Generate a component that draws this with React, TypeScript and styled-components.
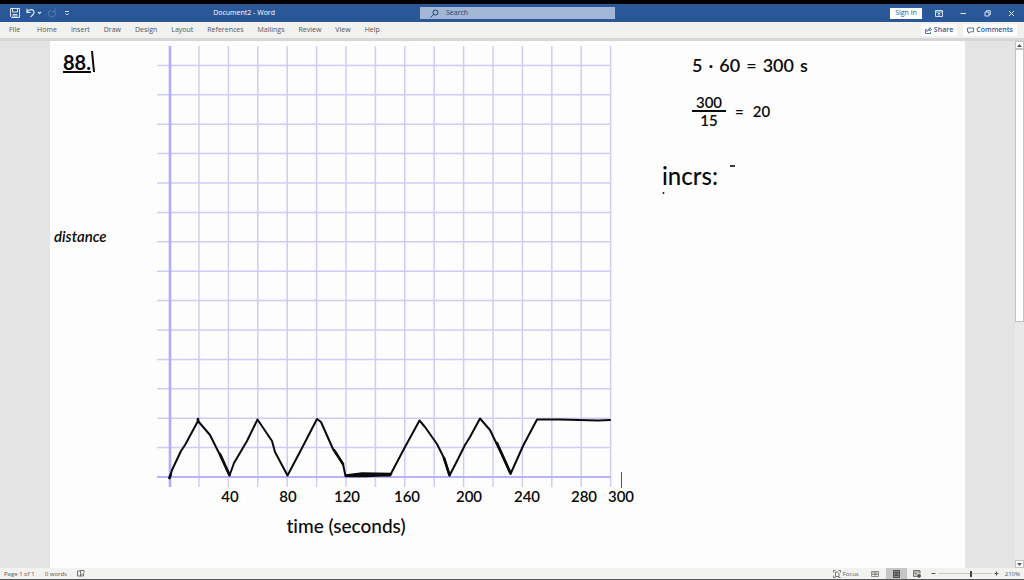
import React from "react";
import styled, { createGlobalStyle } from "styled-components";

const GlobalStyle = createGlobalStyle`
  * { box-sizing: border-box; }
  html, body { margin: 0; background: #e4e4e4; }
  body { font-family: "Open Sans", "Noto Sans", sans-serif; font-size: 7px; line-height: 10px; color: #555; }
  button, input { font: inherit; color: inherit; margin: 0; }
`;

const ink = "#0a0a0a";

const Window = styled.div`
  display: flex;
  flex-direction: column;
  min-height: 100vh;
  border-top: 4px solid #000;
  border-bottom: 1px solid #555;
`;

const TitleBar = styled.header`
  display: grid;
  grid-template-columns: 420fr 195px 409fr;
  align-items: center;
  height: 18px;
  background: #2a5798;
  color: #fff;
`;

const TitleLeft = styled.div`
  display: flex;
  align-items: center;
  justify-content: space-between;
  padding: 0 145px 0 10px;
`;

const Tools = styled.div`
  display: flex;
  align-items: center;
  gap: 6px;
`;

const IconButton = styled.button<{ $dim?: boolean }>`
  display: flex;
  padding: 0;
  border: 0;
  background: none;
  opacity: ${(p) => (p.$dim ? 0.25 : 1)};
`;

const DocTitle = styled.h1`
  margin: 0;
  font-size: 7px;
  font-weight: 400;
  white-space: nowrap;
`;

const SearchBox = styled.label`
  display: flex;
  align-items: center;
  gap: 7px;
  height: 12px;
  padding-left: 10px;
  background: #a2b7d5;
  color: #1f3f70;
`;

const SearchInput = styled.input`
  flex: 1;
  min-width: 0;
  height: 10px;
  padding: 0;
  border: 0;
  outline: 0;
  background: transparent;
  &::placeholder { color: #1f3f70; opacity: 1; }
`;

const WindowControls = styled.div`
  display: flex;
  align-items: center;
  justify-content: flex-end;
  gap: 17px;
  padding-right: 9px;
`;

const SignIn = styled.button`
  height: 11px;
  width: 32px;
  padding: 0;
  margin-right: -4px;
  border: 0;
  background: #fff;
  color: #2a5798;
  line-height: 10px;
`;

const Ribbon = styled.nav`
  display: flex;
  align-items: center;
  justify-content: space-between;
  height: 19px;
  padding: 0 7px 0 9px;
  border-bottom: 3px solid #d6d6d6;
  background: #f1f1f0;
`;

const Tabs = styled.div`
  display: flex;
  gap: 14px;
`;

const Tab = styled.button`
  padding: 0;
  border: 0;
  background: none;
  &:first-child { margin-right: 3px; }
`;

const Actions = styled.div`
  display: flex;
  gap: 6px;
`;

const Action = styled.button`
  display: flex;
  align-items: center;
  gap: 2px;
  height: 12px;
  padding: 0 4px;
  border: 0;
  background: #fff;
  color: #2a5798;
  font-weight: 600;
`;

const Workspace = styled.main`
  flex: 1;
  display: flex;
  background: #e4e4e4;
`;

const Page = styled.article`
  flex: 1;
  display: flex;
  align-items: flex-start;
  margin: 0 50px;
  background: #fdfdfd;
  color: ${ink};
  font-family: Lato, "Open Sans", sans-serif;
  font-weight: 500;
  font-variant-ligatures: none;
`;

const Margin = styled.div`
  width: 100px;
  padding: 9px 0 0 4px;
`;

const Problem = styled.h2`
  display: flex;
  align-items: flex-start;
  margin: 0 0 152px 9px;
  font-size: 20px;
  line-height: 24px;
  font-weight: 700;
`;

const ProblemText = styled.span`
  width: 28px;
  height: 23px;
  border-bottom: 2px solid ${ink};
`;

const AxisName = styled.p`
  margin: 0;
  font-size: 15px;
  line-height: 20px;
  font-weight: 600;
  font-style: italic;
`;

const Graph = styled.svg`
  flex: none;
  display: block;
  width: 490px;
  height: 510px;
`;

const TickText = styled.text`
  font-size: 15px;
  font-weight: 600;
  text-anchor: middle;
  fill: ${ink};
`;

const AxisText = styled.text`
  font-size: 19px;
  font-weight: 500;
  text-anchor: middle;
  fill: ${ink};
`;

const Notes = styled.div`
  flex: 1;
  padding: 13px 0 0 22px;
`;

const Equation = styled.div<{ $size: number; $gap: number }>`
  display: flex;
  align-items: center;
  gap: ${(p) => p.$gap}px;
  margin: 0 0 18px 30px;
  font-size: ${(p) => p.$size}px;
  line-height: 22px;
  font-weight: 600;
`;

const Fraction = styled.div`
  display: flex;
  flex-direction: column;
  width: 34px;
  text-align: center;
  line-height: 16px;
`;

const Numerator = styled.span`
  border-bottom: 2px solid ${ink};
`;

const Increments = styled.div`
  display: flex;
  margin-top: 36px;
  font-size: 24px;
  line-height: 24px;
`;

const ScrollBar = styled.div`
  display: flex;
  flex-direction: column;
  align-items: stretch;
  width: 9px;
  background: #e9e9e9;
`;

const ScrollButton = styled.button`
  display: flex;
  align-items: center;
  justify-content: center;
  height: 8px;
  padding: 0;
  border: 1px solid #c4c4c4;
  background: #fff;
`;

const ScrollThumb = styled.div`
  flex: 273;
  border: 1px solid #c4c4c4;
  background: #fff;
`;

const ScrollRest = styled.div`
  flex: 239;
`;

const StatusBar = styled.footer`
  display: flex;
  align-items: center;
  justify-content: space-between;
  height: 11px;
  padding: 0 4px;
  background: #f2f2f1;
  font-size: 6px;
`;

const StatusGroup = styled.div<{ $gap: number }>`
  display: flex;
  align-items: center;
  gap: ${(p) => p.$gap}px;
`;

const ZoomGroup = styled(StatusGroup)`
  padding-right: 3px;
`;

const ViewButton = styled.button<{ $active?: boolean }>`
  display: flex;
  align-items: center;
  justify-content: center;
  gap: 2px;
  min-width: 21px;
  height: 11px;
  padding: 0;
  border: 0;
  background: ${(p) => (p.$active ? "#c6c6c6" : "none")};
  &:first-child { margin-right: 6px; }
`;

const ZoomSlider = styled.input`
  appearance: none;
  width: 54px;
  height: 9px;
  background: linear-gradient(#c8c8c8, #c8c8c8) center / 100% 1px no-repeat;
  &::-webkit-slider-thumb {
    appearance: none;
    width: 2px;
    height: 6px;
    background: #444;
  }
`;

const tabs = ["File", "Home", "Insert", "Draw", "Design", "Layout", "References", "Mailings", "Review", "View", "Help"];

const ticks: [string, number][] = [
  ["40", 230], ["80", 288], ["120", 347], ["160", 407], ["200", 469], ["240", 527], ["280", 584], ["300", 621],
];

const step = 29.4;

function DistanceGraph() {
  return (
    <Graph viewBox="150 41 490 510" role="img" aria-label="Distance against time in seconds">
      <g stroke="#cfccfa" strokeWidth="1.5">
        {Array.from({ length: 14 }, (_, i) => (
          <path key={`h${i}`} d={`M157 ${65.4 + i * step}H611`} />
        ))}
        {Array.from({ length: 15 }, (_, i) => (
          <path key={`v${i}`} d={`M${170 + (i + 1) * step - 0.4} 46V487`} />
        ))}
      </g>
      <path d="M157 477H611" stroke="#b9b4f9" strokeWidth="2.2" />
      <path d="M170 46V487" stroke="#b3acf9" strokeWidth="2.6" />
      <g fill="none" stroke={ink} strokeWidth="2" strokeLinecap="round" strokeLinejoin="round">
        <path d="M170 477L172 470L181 451L185 445L198 421L210 435L220 455L229.500 475.500L234 463L247 441L257.500 419.500L272 441L275 452L287.500 475.500L302 448L317 419L321 422L333 449L343 464L345.500 476L357 474.500L366 474L390 475.500L405 447L419.500 420.500L425 427L437 444L444 458L449.500 475.500L456 463L465 445L470 437L480 418.500L490 430L502 455L510.500 474L523 446L537 419.500H560L598 420.500L610 420" />
        <path d="M169.500 478L170.500 475M198 419V422M220 454L229.500 475M334 450L343 464M346 476H366L390 475M444 458L449.500 475M346 475.500L362 473.500L391 474M497 443L510.500 473" strokeWidth="2.600" />
      </g>
      <path d="M621.5 472V488" stroke="#555" strokeWidth="1" />
      {ticks.map(([label, x]) => (
        <TickText key={label} x={x} y={502}>{label}</TickText>
      ))}
      <AxisText x={346} y={533}>time (seconds)</AxisText>
    </Graph>
  );
}

export default function App() {
  return (
    <>
      <GlobalStyle />
      <Window>
        <TitleBar>
          <TitleLeft>
            <Tools>
              <IconButton aria-label="Save">
                <svg width="10" height="10" viewBox="0 0 10 10" fill="none" stroke="#dbe5f3">
                  <path d="M.5.500H9.500V9.500H1.500L.5 8.500ZM2.500.500V4H7.500V.500M3 9.500V6.500H7V9.500M5 7V9" />
                </svg>
              </IconButton>
              <IconButton aria-label="Undo">
                <svg width="16" height="10" viewBox="0 0 16 10" fill="none" stroke="#dbe5f3" strokeWidth="1.200">
                  <path d="M1 .8V4.500H4.800M1.200 4.300C3 1 7.500.800 8 4C8.300 6 6.500 7.200 4.500 9M12 4L13.500 5.500L15 4" />
                </svg>
              </IconButton>
              <IconButton aria-label="Redo" $dim>
                <svg width="9" height="10" viewBox="0 0 9 10" fill="none" stroke="#dbe5f3">
                  <path d="M7 .500V3.500H4M7 3.500A3.500 3.500 0 1 1 3 2" />
                </svg>
              </IconButton>
              <IconButton aria-label="Customize toolbar">
                <svg width="8" height="8" viewBox="4 0 8 8" fill="none" stroke="#dbe5f3">
                  <path d="M6 2.500H10M6.500 4.500L8 6L9.500 4.500" />
                </svg>
              </IconButton>
            </Tools>
            <DocTitle>Document2 - Word</DocTitle>
          </TitleLeft>
          <SearchBox>
            <svg width="9" height="9" viewBox="0 0 9 9" fill="none" stroke="#1f3f70" aria-hidden="true">
              <circle cx="5.500" cy="3.500" r="2.500" />
              <path d="M3.700 5.300L.5 8.500" />
            </svg>
            <SearchInput placeholder="Search" aria-label="Search" />
          </SearchBox>
          <WindowControls>
            <SignIn>Sign in</SignIn>
            <IconButton aria-label="Ribbon display options">
              <svg width="8" height="7" viewBox="0 0 8 7" fill="none" stroke="#e6edf7">
                <path d="M.5.500H7.500V6.500H.500ZM.5 2H7.500M4 6V3M2.700 4.300L4 3L5.300 4.300" strokeWidth=".9" />
              </svg>
            </IconButton>
            <IconButton aria-label="Minimize">
              <svg width="7" height="7" viewBox="0 0 7 7" stroke="#e6edf7"><path d="M.5 3.500H6" /></svg>
            </IconButton>
            <IconButton aria-label="Restore">
              <svg width="7" height="7" viewBox="0 0 7 7" fill="none" stroke="#e6edf7">
                <path d="M1 2H5V6H1ZM2.500 2V.700H6.300V4.500H5" strokeWidth=".9" />
              </svg>
            </IconButton>
            <IconButton aria-label="Close">
              <svg width="7" height="7" viewBox="0 0 7 7" stroke="#e6edf7"><path d="M1 1L6 6M6 1L1 6" /></svg>
            </IconButton>
          </WindowControls>
        </TitleBar>

        <Ribbon>
          <Tabs>
            {tabs.map((name) => (
              <Tab key={name}>{name}</Tab>
            ))}
          </Tabs>
          <Actions>
            <Action>
              <svg width="7" height="7" viewBox="0 0 7 7" fill="none" stroke="#2a5798" strokeWidth=".8" aria-hidden="true">
                <path d="M2 2.500H.500V6.500H5.500V5M2 4.500C2.300 2.700 3.500 2 5 2V.500L6.700 2.500L5 4V3C3.500 3 2.700 3.500 2 4.500Z" />
              </svg>
              Share
            </Action>
            <Action>
              <svg width="7" height="7" viewBox="0 0 7 7" fill="none" stroke="#2a5798" strokeWidth=".8" aria-hidden="true">
                <path d="M.5 1H6.500V4.800H3.300L1.800 6.300V4.800H.500Z" />
              </svg>
              Comments
            </Action>
          </Actions>
        </Ribbon>

        <Workspace>
          <Page>
            <Margin>
              <Problem>
                <ProblemText>88.</ProblemText>
                <svg width="4" height="24" viewBox="0 0 4 24" aria-hidden="true">
                  <path d="M1 1L3 22" stroke={ink} strokeWidth="2" />
                </svg>
              </Problem>
              <AxisName>distance</AxisName>
            </Margin>
            <DistanceGraph />
            <Notes>
              <Equation $size={18} $gap={6}>
                <span>5</span><span>·</span><span>60</span><span>=</span><span>300</span><span>s</span>
              </Equation>
              <Equation $size={15} $gap={9}>
                <Fraction><Numerator>300</Numerator><span>15</span></Fraction>
                <span>=</span><span>20</span>
              </Equation>
              <Increments>
                <span>incrs:</span>
                <svg width="20" height="4" viewBox="0 0 20 4" aria-hidden="true">
                  <path d="M12 2H17" stroke={ink} strokeWidth="1.600" />
                </svg>
              </Increments>
              <svg width="4" height="4" viewBox="0 0 4 4" aria-hidden="true">
                <circle cx="1.500" cy="1" r=".9" fill={ink} />
              </svg>
            </Notes>
          </Page>
          <ScrollBar>
            <ScrollButton aria-label="Scroll up">
              <svg width="5" height="3" viewBox="0 0 5 3"><path d="M0 3L2.500 0L5 3Z" fill="#555" /></svg>
            </ScrollButton>
            <ScrollThumb />
            <ScrollRest />
            <ScrollButton aria-label="Scroll down">
              <svg width="5" height="3" viewBox="0 0 5 3"><path d="M0 0L2.500 3L5 0Z" fill="#555" /></svg>
            </ScrollButton>
          </ScrollBar>
        </Workspace>

        <StatusBar>
          <StatusGroup $gap={10}>
            <span>Page 1 of 1</span>
            <span>0 words</span>
            <svg width="8" height="7" viewBox="0 0 8 7" fill="none" stroke="#555" strokeWidth=".8" aria-hidden="true">
              <path d="M3.500 1H.500V6H3.500M3.500 6.500V.500H7V2M3.500 6L7.500 2.500M4.500 6H6.500V4" />
            </svg>
          </StatusGroup>
          <StatusGroup $gap={3}>
            <StatusGroup $gap={0}>
              <ViewButton>
                <svg width="8" height="8" viewBox="0 0 8 8" fill="none" stroke="#555" strokeWidth=".8" aria-hidden="true">
                  <path d="M.5 2.500V.500H2.500M5.500.500H7.500V2.500M.5 5.500V7.500H2.500M2.500 6.500V2H4.500L6 3.500V6.500ZM5.500 7.500H7.500" />
                </svg>
                Focus
              </ViewButton>
              <ViewButton aria-label="Read mode">
                <svg width="8" height="6" viewBox="0 0 8 6" fill="none" stroke="#777" strokeWidth=".8">
                  <path d="M.5.500H7.500V5.500H.500ZM4 .500V5.500M1 2H7M1 3.500H7" />
                </svg>
              </ViewButton>
              <ViewButton aria-label="Print layout" $active>
                <svg width="7" height="8" viewBox="0 0 7 8" fill="#8a8a8a" stroke="#444" strokeWidth=".9">
                  <path d="M.5.500H6.500V7.500H.500ZM1.500 2.500H5.500M1.500 4H5.500M1.500 5.500H5.500" />
                </svg>
              </ViewButton>
              <ViewButton aria-label="Web layout">
                <svg width="8" height="8" viewBox="0 0 8 8" fill="none" stroke="#555" strokeWidth=".8">
                  <path d="M4 6.500H.500V.500H7V3.500M1 2H7M1.500 3.500H4M1.500 5H3.500" />
                  <circle cx="6" cy="5.800" r="1.600" fill="#555" />
                </svg>
              </ViewButton>
            </StatusGroup>
            <ZoomGroup $gap={2}>
              <IconButton aria-label="Zoom out">
                <svg width="5" height="5" viewBox="0 0 5 5" stroke="#555"><path d="M.5 2.500H4.500" /></svg>
              </IconButton>
              <ZoomSlider type="range" min={0} max={100} defaultValue={63} aria-label="Zoom" />
              <IconButton aria-label="Zoom in">
                <svg width="5" height="5" viewBox="0 0 5 5" stroke="#555"><path d="M.5 2.500H4.500M2.500.500V4.500" /></svg>
              </IconButton>
            </ZoomGroup>
            <span>210%</span>
          </StatusGroup>
        </StatusBar>
      </Window>
    </>
  );
}
